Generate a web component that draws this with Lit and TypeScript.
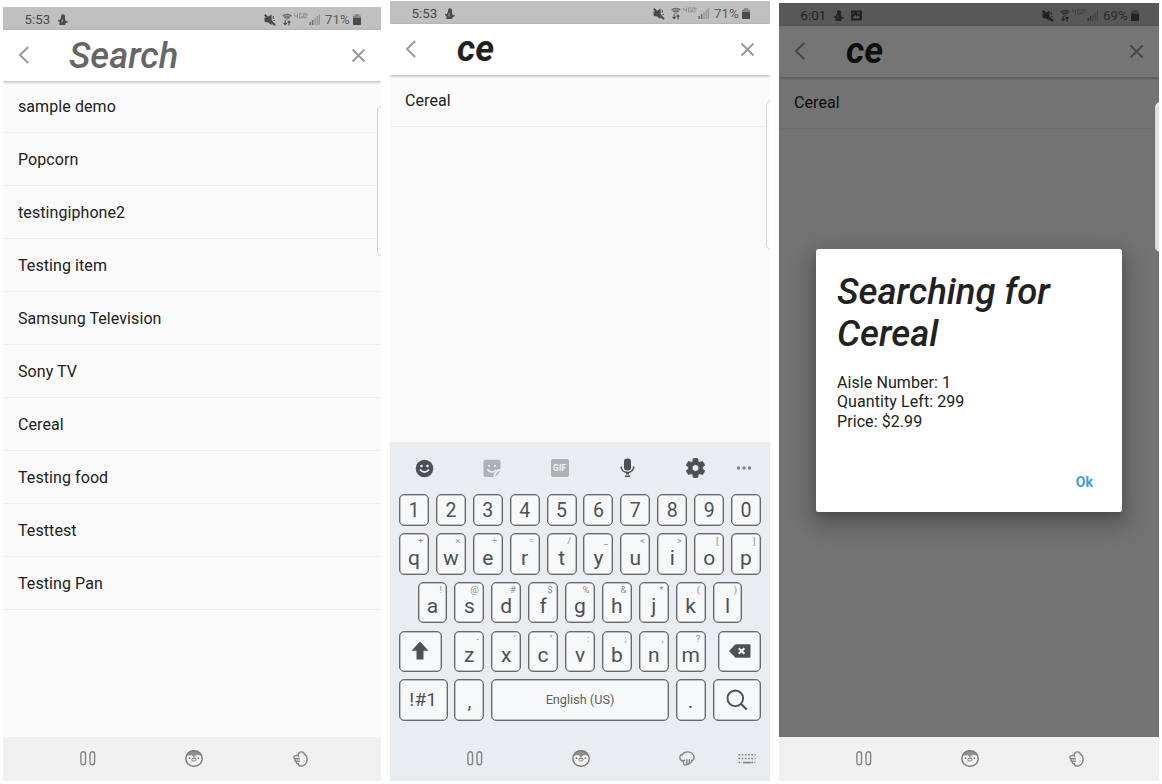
import { LitElement, html, css, svg, nothing } from "lit";
import { customElement, property } from "lit/decorators.js";

const muteIcon = html`<svg class="mute" width="12" height="12" viewBox="0 0 12 12">
  <path d="M.5 3.500H3L7.600.4V11L3.600 8.200H1.400L.5 7z" fill="currentColor" />
  <path d="M.8.8 11 11.200" stroke="currentColor" stroke-width="2" />
  <path d="M9.300 2.200v2.600M9.300 6.500h1.500" stroke="currentColor" stroke-width="1.200" fill="none" />
</svg>`;
const wifiIcon = html`<svg class="wifi" width="10" height="13" viewBox="0 0 10 13">
  <path d="M.3 2.600Q5-1 9.700 2.600L5 8z" fill="currentColor" opacity=".35" />
  <path d="M.6 2.900Q5-.4 9.400 2.900M2.200 4.800Q5 2.800 7.800 4.800" fill="none" stroke="currentColor" stroke-width="1.200" opacity=".6" />
  <path d="M3.200 7.200v4M1.600 9.800l1.600 1.900 1.600-1.900M7 12.400v-4M5.600 9.600 7 8l1.400 1.600" fill="none" stroke="currentColor" stroke-width="1.100" />
</svg>`;
const lteIcon = html`<svg class="lte" width="14" height="6" viewBox="0 0 14 6">
  <path d="M.6.4V3H4M3.500.4V5.400M8.400.8H5.500V5H8.400V3H7M9.800.4V5H12V.8H9.800M13.200.6V2.400" fill="none" stroke="currentColor" stroke-width=".8" />
</svg>`;
const signalIcon = html`<svg class="signal" width="11" height="11" viewBox="0 0 11 11">
  <path d="M1.200 11V8M3.600 11V6" stroke="currentColor" stroke-width="1.600" />
  <path d="M6 11V4M8.200 11V2.200M10.300 11V.3" stroke="currentColor" stroke-width="1.200" opacity=".6" />
</svg>`;
const batteryIcon = html`<svg class="battery" width="8" height="11" viewBox="0 0 8 11">
  <path d="M2.200 0h3.600v1.400H7.200a.8.8 0 0 1 .8.8V10a1 1 0 0 1-1 1H1a1 1 0 0 1-1-1V2.200a.8.8 0 0 1 .8-.8H2.200z" fill="currentColor" opacity=".5" />
  <path d="M0 4h8v6a1 1 0 0 1-1 1H1a1 1 0 0 1-1-1z" fill="currentColor" />
</svg>`;
const snowmanIcon = html`<svg class="app" width="10" height="11" viewBox="0 0 10 11">
  <circle cx="5" cy="2.200" r="2" fill="currentColor" />
  <path d="M3.200 3h3.500l1 4.200-1.700 3.600H2.300L1.200 7.500z" fill="currentColor" />
  <path d="M.2 6.200 2.400 8M6 9.400 9.600 7.400M1.300 10.200h6" stroke="currentColor" stroke-width="1.500" />
  <path d="M4.300 5.300 4 8.600" stroke="#c0c0c0" stroke-width=".8" />
</svg>`;
const photoIcon = html`<svg class="photo" width="11" height="11" viewBox="0 0 11 11">
  <path fill-rule="evenodd" d="M1 .5h9a1 1 0 0 1 1 1v8a1 1 0 0 1-1 1H1a1 1 0 0 1-1-1v-8a1 1 0 0 1 1-1zM1.500 8.300h8L7 5.200 5.500 6.800 3.800 4.800zM2 2.200v1.300h1.300V2.200zM6 2.200v1.200h2.500V2.200z" fill="currentColor" />
</svg>`;

const recentsIcon = html`<svg width="16" height="15" viewBox="0 0 16 15">
  <g fill="none" stroke="currentColor" stroke-width="1.400">
    <rect x=".9" y=".8" width="4.600" height="13" rx="2.300" />
    <rect x="10" y=".8" width="4.600" height="13" rx="2.300" />
  </g>
</svg>`;
const penguinIcon = html`<svg width="18" height="17" viewBox="0 0 18 17">
  <rect x=".8" y=".8" width="16.400" height="15.400" rx="7.700" fill="#f4f4f4" />
  <path d="M1.300 6.500C2 2.600 5 .8 9 .8s7 1.800 7.700 5.700C14 4.300 11 4.400 9 7.500 7 4.400 4 4.300 1.300 6.500z" fill="#8f8f8f" />
  <path d="M6.500 9.500Q9 5 11.500 9.500" fill="#8f8f8f" />
  <circle cx="4.600" cy="8.200" r=".9" fill="#777" /><circle cx="13.400" cy="8.200" r=".9" fill="#777" />
  <ellipse cx="9" cy="9.600" rx="2.200" ry="1.400" fill="#e9e5a8" stroke="#777" stroke-width=".8" />
  <rect x=".8" y=".8" width="16.400" height="15.400" rx="7.700" fill="none" stroke="#7e7e7e" stroke-width="1.500" />
</svg>`;
const handPath = svg`<path d="M4.200 9.800C2 9.800.5 8.200.9 6.300 1 4.700 2 3.800 3.200 3.800 4.200 1.900 6 .9 8.200.9c3.200 0 6.300 1.900 6.800 4.700.3 1.600-.4 3.600-2.200 4-.2 1.600-.9 2.200-1.600 2.100-.4 0-.9-.4-.9-1M10.300 8.600v2.600c0 1.600-.6 2.100-1.300 2.100-.5 0-1-.4-1.100-1M7.800 8.600v4c-.2 1.300-1.100 1.700-1.900 1.500-1.100-.3-1.600-1.500-1.700-4.300l1.200-.5" fill="none" stroke="currentColor" stroke-width="1.400" stroke-linecap="round" stroke-linejoin="round" />`;
const handIcon = html`<svg width="16" height="16" viewBox="0 0 16 16"><g transform="rotate(90 8 8)">${handPath}</g></svg>`;
const handDownIcon = html`<svg width="16" height="16" viewBox="0 0 16 16">${handPath}</svg>`;
const hideKeyboardIcon = html`<svg width="18" height="12" viewBox="0 0 18 12">
  <g stroke="currentColor" stroke-width="1.500" stroke-dasharray="1.700 1.500"><path d="M.5 1.800h17M.5 5.600h17" /><path d="M.5 9.400h3.500M13.200 9.400h4" /></g>
  <path d="M5 9.600h8" stroke="currentColor" stroke-width="1.700" />
</svg>`;

const smileIcon = html`<svg width="19" height="19" viewBox="0 0 19 19">
  <circle cx="9.500" cy="9.500" r="8.800" fill="currentColor" />
  <circle cx="6.500" cy="7" r="1.300" fill="#e9edf0" /><circle cx="12.500" cy="7" r="1.300" fill="#e9edf0" />
  <path d="M5 10.500q4.500 5.400 9 0" fill="none" stroke="#e9edf0" stroke-width="1.700" />
</svg>`;
const stickerIcon = html`<svg class="soft" width="18" height="19" viewBox="0 0 18 19">
  <path d="M2.500.8h13a2 2 0 0 1 2 2V10q-6.500 0-7 8H2.500a2 2 0 0 1-2-2V2.800a2 2 0 0 1 2-2zM17.500 12q-4.500.3-5 6z" fill="currentColor" />
  <circle cx="6" cy="6.800" r="1.100" fill="#e9edf0" /><circle cx="12" cy="6.800" r="1.100" fill="#e9edf0" />
  <path d="M4.500 10q1 3 4.500 3 2.400 0 3.800-2.200" fill="none" stroke="#e9edf0" stroke-width="1.500" />
</svg>`;
const micIcon = html`<svg width="15" height="20" viewBox="0 0 15 20">
  <rect x="4" y=".5" width="7" height="12" rx="3" fill="currentColor" />
  <path d="M1.200 8.500c0 8 12.600 8 12.600 0" fill="none" stroke="currentColor" stroke-width="1.600" />
  <path d="M4.800 18.200h5.400M6 15.800h3" stroke="currentColor" stroke-width="1.500" />
</svg>`;
const gearIcon = html`<svg width="19" height="20" viewBox="2 2 20 20">
  <path d="M19.430 12.980c.04-.32.07-.64.07-.98s-.03-.66-.07-.98l2.110-1.650c.19-.15.24-.42.12-.64l-2-3.460c-.12-.22-.39-.3-.61-.22l-2.490 1c-.52-.4-1.080-.73-1.690-.98l-.38-2.650C14.460 2.180 14.250 2 14 2h-4c-.25 0-.46.18-.49.42l-.38 2.650c-.61.25-1.170.59-1.690.98l-2.490-1c-.23-.09-.49 0-.61.22l-2 3.460c-.13.22-.07.49.12.64l2.110 1.650c-.04.32-.07.65-.07.98s.03.66.07.98l-2.110 1.650c-.19.15-.24.42-.12.64l2 3.460c.12.22.39.3.61.22l2.490-1c.52.4 1.080.73 1.690.98l.38 2.650c.03.24.24.42.49.42h4c.25 0 .46-.18.49-.42l.38-2.650c.61-.25 1.170-.59 1.690-.98l2.490 1c.23.09.49 0 .61-.22l2-3.460c.12-.22.07-.49-.12-.64l-2.110-1.650zM12 15.500c-1.930 0-3.500-1.570-3.500-3.500s1.570-3.500 3.500-3.500 3.500 1.570 3.500 3.500-1.570 3.500-3.500 3.500z" fill="currentColor" stroke="currentColor" stroke-width=".7" />
</svg>`;
const moreIcon = html`<svg width="16" height="4" viewBox="0 0 16 4" fill="#7c8083">
  <circle cx="2.500" cy="2" r="1.700" /><circle cx="8" cy="2" r="1.700" /><circle cx="13.500" cy="2" r="1.700" />
</svg>`;
const shiftIcon = html`<svg width="18" height="19" viewBox="0 0 18 19">
  <path d="M9 .5 17.500 9.700H12.500V18.500H5.500V9.700H.5z" fill="currentColor" />
</svg>`;
const backspaceIcon = html`<svg width="22" height="14" viewBox="0 0 22 14">
  <path d="M0 7 6 .8Q6.500.3 7.300.3H20.500a1 1 0 0 1 1 1V12.700a1 1 0 0 1-1 1H7.300Q6.500 13.700 6 13.200z" fill="currentColor" />
  <path d="M9.800 4.200l5.600 5.600M15.400 4.200 9.800 9.800" stroke="#f7f8fa" stroke-width="2" />
</svg>`;
const magnifierIcon = html`<svg width="22" height="22" viewBox="0 0 22 22">
  <circle cx="9.300" cy="9.300" r="7.800" fill="none" stroke="currentColor" stroke-width="1.900" />
  <path d="M14.800 14.800l6 5.800" stroke="currentColor" stroke-width="2.100" />
</svg>`;

@customElement("key-board")
class KeyBoard extends LitElement {
  static styles = css`
    :host { display: flex; flex-direction: column; height: 295px; background: #e9edf0; color: #4d5154; padding: 0 9px; box-sizing: border-box; }
    svg { display: block; flex: none; }
    .tools { display: flex; height: 52px; align-items: center; }
    .tool { display: flex; justify-content: center; width: 67.800px; flex: none; }
    .tool:first-child { width: 50px; }
    .tool:nth-child(2) { width: 85.600px; }
    .tool:nth-child(3) { width: 50px; }
    .tool:nth-child(4) { width: 86px; }
    .tool:nth-child(5) { width: 49px; }
    .tool:last-child { width: 49px; }
    .soft { color: #adb1b4; }
    .gif { display: grid; place-items: center; width: 18px; height: 18px; border-radius: 2px; background: #adb1b4; color: #f1f3f5; font-size: 8.500px; font-weight: 700; }
    .rows { display: flex; flex-direction: column; gap: 7.200px; }
    .row { display: flex; height: 41.400px; gap: 6.900px; }
    .numbers { height: 32.200px; }
    .numbers .key { padding-top: 1px; }
    .home { padding: 0 18.500px; }
    .key { position: relative; flex: 1 1 0; display: flex; justify-content: center; align-items: center; box-sizing: border-box; border: 1px solid #676a6d; box-shadow: inset 0 0 0 .5px #85888b; border-radius: 5px; background: #f7f8fa; min-width: 0; font-size: 19.500px; line-height: 24px; }
    .letter { font-size: 21px; padding-top: 7px; }
    .hint { position: absolute; top: 0; right: 4.500px; font-size: 9.500px; line-height: 13px; color: #8c8f92; }
    .shift { flex: 0 0 42.800px; margin-right: 5.600px; padding-bottom: 1px; }
    .back { flex: 0 0 42.800px; margin-left: 5.600px; padding-bottom: 1px; }
    .wide { flex: 0 0 48.500px; font-size: 19px; letter-spacing: .2px; }
    .narrow { flex: 0 0 30.100px; padding-top: 5px; }
    .space { font-size: 12.700px; color: #5c5f62; }
  `;

  keys(letters: string, hints: string[]) {
    return [...letters].map((c, i) => html`<div class="key letter">${c}<span class="hint">${hints[i]}</span></div>`);
  }

  render() {
    return html`
      <div class="tools">
        <div class="tool">${smileIcon}</div>
        <div class="tool">${stickerIcon}</div>
        <div class="tool"><span class="gif">GIF</span></div>
        <div class="tool">${micIcon}</div>
        <div class="tool">${gearIcon}</div>
        <div class="tool">${moreIcon}</div>
      </div>
      <div class="rows">
        <div class="row numbers">${[..."1234567890"].map((n) => html`<div class="key">${n}</div>`)}</div>
        <div class="row">${this.keys("qwertyuiop", ["+", "×", "÷", "=", "/", "_", "<", ">", "[", "]"])}</div>
        <div class="row home">${this.keys("asdfghjkl", ["!", "@", "#", "$", "%", "&", "*", "(", ")"])}</div>
        <div class="row">
          <div class="key shift">${shiftIcon}</div>
          ${this.keys("zxcvbnm", ["-", "'", "\"", ":", ";", ",", "?"])}
          <div class="key back">${backspaceIcon}</div>
        </div>
        <div class="row">
          <div class="key wide">!#1</div>
          <div class="key narrow">,</div>
          <div class="key space">English (US)</div>
          <div class="key narrow">.</div>
          <div class="key wide">${magnifierIcon}</div>
        </div>
      </div>
    `;
  }
}

@customElement("phone-screen")
class PhoneScreen extends LitElement {
  @property() time = "";
  @property() battery = "";
  @property() query = "";
  @property({ type: Array }) items: string[] = [];
  @property({ type: Boolean }) keyboard = false;
  @property({ type: Boolean }) dialog = false;

  static styles = css`
    :host { position: relative; display: flex; flex-direction: column; background: #fafafa; overflow: hidden; color: #212121; }
    svg { display: block; flex: none; }
    .status { display: flex; align-items: center; height: 22.500px; flex: none; padding: 2.500px 20.500px 0 21.500px; box-sizing: border-box; background: #c0c0c0; color: #4a4a4a; font-size: 13.300px; line-height: 16px; }
    .time { width: 33.500px; }
    .photo { margin-left: 7px; }
    .mute { margin-left: auto; }
    .wifi { margin-left: 6px; }
    .lte { margin-left: 2.500px; margin-bottom: 7px; color: #858585; }
    .signal { margin-left: 1px; color: #707070; }
    .percent { margin-left: 5px; width: 26.500px; color: #5c5c5c; }
    .battery { margin-left: 1px; }
    .bar { position: relative; display: flex; align-items: center; height: 51.500px; flex: none; padding: 0 15px 0 15px; box-sizing: border-box; background: #fff; box-shadow: 0 1px 3px rgba(0, 0, 0, .3); }
    .chevron, .close { color: #999; }
    .title { flex: 1; padding: 0 0 0 40px; font-size: 36px; line-height: 42px; font-style: italic; font-weight: 700; }
    .placeholder { padding: 1px 0 0 39px; font-weight: 500; color: #666; font-size: 36.300px; }
    .list { flex: 1; min-height: 0; }
    .item { height: 53px; box-sizing: border-box; padding: 2px 15px 0; border-bottom: 1px solid #efefef; font-size: 16px; line-height: 50px; letter-spacing: .08px; }
    .item:first-child { height: 52px; padding-top: 1px; }
    .nav { position: relative; height: 44px; flex: none; background: #f1f1f1; color: #848484; display: grid; grid-template-columns: 106px 106px 106px; padding: 0 0 1px 31.500px; align-items: center; justify-items: center; box-sizing: border-box; }
    .typing { background: #e9edf0; grid-template-columns: 106px 106px 106px 14px; padding-left: 32px; }
    .edge { position: absolute; right: -8px; top: 99px; width: 12px; height: 150px; box-sizing: border-box; border: 1px solid #d2d2d2; border-radius: 5px; background: #fcfcfc; }
    .lit { background: #e2e2e2; border-color: #d8d8d8; }
    .scrim { position: absolute; inset: 0 0 44px 0; background: rgba(0, 0, 0, .54); display: flex; }
    .card { box-sizing: border-box; width: 306px; height: 263px; margin: 246px 0 0 37px; padding: 22px 29px 0 21px; background: #fff; border-radius: 2.500px; box-shadow: 0 9px 22px 6px rgba(0, 0, 0, .22), 0 5px 9px rgba(0, 0, 0, .15); display: flex; flex-direction: column; }
    .heading { font-size: 36.500px; line-height: 42px; font-style: italic; font-weight: 500; }
    .details { margin-top: 17.800px; font-size: 16px; line-height: 19.400px; letter-spacing: .08px; }
    .ok { margin-top: 42.400px; align-self: flex-end; font-size: 14px; line-height: 18px; font-weight: 700; color: #3f9cdc; }
  `;

  render() {
    return html`
      <div class="status">
        <span class="time">${this.time}</span>${snowmanIcon}${this.dialog ? photoIcon : nothing}
        ${muteIcon}${wifiIcon}${lteIcon}${signalIcon}
        <span class="percent">${this.battery}</span>${batteryIcon}
      </div>
      <div class="bar">
        <svg class="chevron" width="12" height="18" viewBox="0 0 12 18"><path d="M10.200 1 2 9l8.200 8" fill="none" stroke="currentColor" stroke-width="2" /></svg>
        <div class="title ${this.query ? "" : "placeholder"}">${this.query || "Search"}</div>
        <svg class="close" width="15" height="15" viewBox="0 0 15 15"><path d="M1.500 1.500l12 12M13.500 1.500l-12 12" stroke="currentColor" stroke-width="1.900" /></svg>
      </div>
      <div class="list">${this.items.map((t) => html`<div class="item">${t}</div>`)}</div>
      ${this.keyboard ? html`<key-board></key-board>` : nothing}
      <div class="nav ${this.keyboard ? "typing" : ""}">
        ${recentsIcon}${penguinIcon}${this.keyboard ? handDownIcon : handIcon}${this.keyboard ? hideKeyboardIcon : nothing}
      </div>
      ${this.dialog
        ? html`<div class="scrim">
            <div class="card">
              <div class="heading">Searching for Cereal</div>
              <div class="details"><div>Aisle Number: 1</div><div>Quantity Left: 299</div><div>Price: $2.99</div></div>
              <div class="ok">Ok</div>
            </div>
          </div>`
        : nothing}
      <div class="edge ${this.dialog ? "lit" : ""}"></div>
    `;
  }
}

@customElement("app-root")
class AppRoot extends LitElement {
  static styles = css`
    :host { display: flex; align-items: flex-end; box-sizing: border-box; width: 1162px; height: 784px; padding: 0 3px 3px; background: #fff; font-family: Roboto, sans-serif; overflow: hidden; }
    .first { width: 378px; height: 774px; margin-right: 9px; }
    .second { width: 380px; height: 780px; margin-right: 9px; }
    .third { width: 380px; height: 778px; }
  `;

  items = ["sample demo", "Popcorn", "testingiphone2", "Testing item", "Samsung Television", "Sony TV", "Cereal", "Testing food", "Testtest", "Testing Pan"];

  render() {
    return html`
      <phone-screen class="first" time="5:53" battery="71%" .items=${this.items}></phone-screen>
      <phone-screen class="second" time="5:53" battery="71%" query="ce" .items=${["Cereal"]} keyboard></phone-screen>
      <phone-screen class="third" time="6:01" battery="69%" query="ce" .items=${["Cereal"]} dialog></phone-screen>
    `;
  }
}
